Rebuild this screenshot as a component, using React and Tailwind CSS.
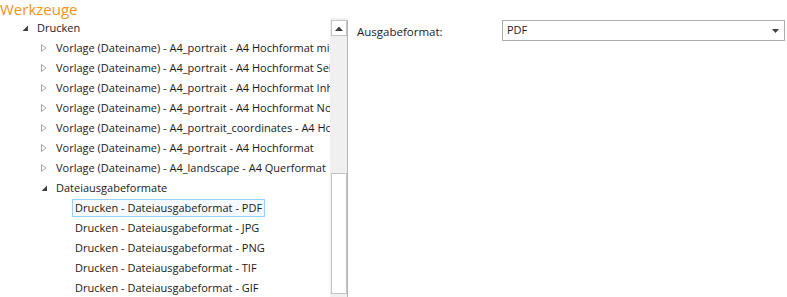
import React from 'react';

const font = { fontFamily: '"Segoe UI", "Open Sans", "Noto Sans", sans-serif' };

const vorlagen = [
    'Vorlage (Dateiname) - A4_portrait - A4 Hochformat mit Seitenzahlen',
    'Vorlage (Dateiname) - A4_portrait - A4 Hochformat Seitenkopf',
    'Vorlage (Dateiname) - A4_portrait - A4 Hochformat Inhalt',
    'Vorlage (Dateiname) - A4_portrait - A4 Hochformat Notizen',
    'Vorlage (Dateiname) - A4_portrait_coordinates - A4 Hochformat',
    'Vorlage (Dateiname) - A4_portrait - A4 Hochformat',
    'Vorlage (Dateiname) - A4_landscape - A4 Querformat',
];

const formate = ['PDF', 'JPG', 'PNG', 'TIF', 'GIF'];

function Collapsed() {
    return (
        <svg width="8" height="10" viewBox="0 0 8 10" className="shrink-0">
            <path d="M1.5 1.5 L6 5 L1.5 8.5 Z" fill="none" stroke="#a6a6a6" strokeWidth="1" />
        </svg>
    );
}

function Expanded() {
    return (
        <svg width="8" height="10" viewBox="0 0 8 10" className="shrink-0">
            <path d="M7 2.5 L7 8 L1.5 8 Z" fill="#404040" />
        </svg>
    );
}

function Row({ indent, icon, children }) {
    return (
        <div className="h-5 flex items-center whitespace-nowrap" style={{ paddingLeft: indent }}>
            {icon}
            <span className="ml-[8px]">{children}</span>
        </div>
    );
}

export default function App() {
    return (
        <div className="w-[787px] h-[297px] bg-white overflow-hidden text-[11px] text-[#1a1a1a]" style={font}>
            <div className="h-[18px] leading-[18px] text-[15px] text-[#f39321]">Werkzeuge</div>
            <div className="flex h-[279px]">
                <div className="w-[330px] overflow-hidden">
                    <Row indent={21} icon={<Expanded />}>Drucken</Row>
                    {vorlagen.map((v) => (
                        <Row key={v} indent={40} icon={<Collapsed />}>{v}</Row>
                    ))}
                    <Row indent={40} icon={<Expanded />}>Dateiausgabeformate</Row>
                    {formate.map((f, i) => (
                        <div key={f} className="h-5 flex items-center whitespace-nowrap pl-[72px]">
                            <span
                                className={
                                    i === 0
                                        ? 'px-[2px] h-[18px] leading-[16px] border border-[#99d1ff] bg-[#f5faff]'
                                        : 'px-[3px]'
                                }
                            >
                                Drucken - Dateiausgabeformat - {f}
                            </span>
                        </div>
                    ))}
                </div>
                <div className="w-[17px] bg-[#f0f0f0] flex flex-col items-center pt-[2px]">
                    <div className="w-[16px] h-[16px] border border-[#c4c4c4] bg-white flex items-center justify-center">
                        <svg width="8" height="5" viewBox="0 0 8 5">
                            <path d="M0 5 L4 0.5 L8 5 Z" fill="#404040" />
                        </svg>
                    </div>
                    <div className="mt-[137px] w-[16px] h-[121px] border border-[#c4c4c4] bg-white" />
                </div>
                <div className="w-px bg-[#b4b4b4] mt-[2px]" />
                <div className="flex-1 flex items-start pl-[9px] pt-[2px]">
                    <div className="w-[145px] h-[21px] leading-[21px] pt-[1px] text-[11.5px]">Ausgabeformat:</div>
                    <div className="w-[283px] h-[21px] border border-[#abadb3] flex items-center justify-between pl-[4px] pr-[5px]">
                        <span>PDF</span>
                        <svg width="7" height="4" viewBox="0 0 7 4">
                            <path d="M0 0 L7 0 L3.5 4 Z" fill="#404040" />
                        </svg>
                    </div>
                </div>
            </div>
        </div>
    );
}
